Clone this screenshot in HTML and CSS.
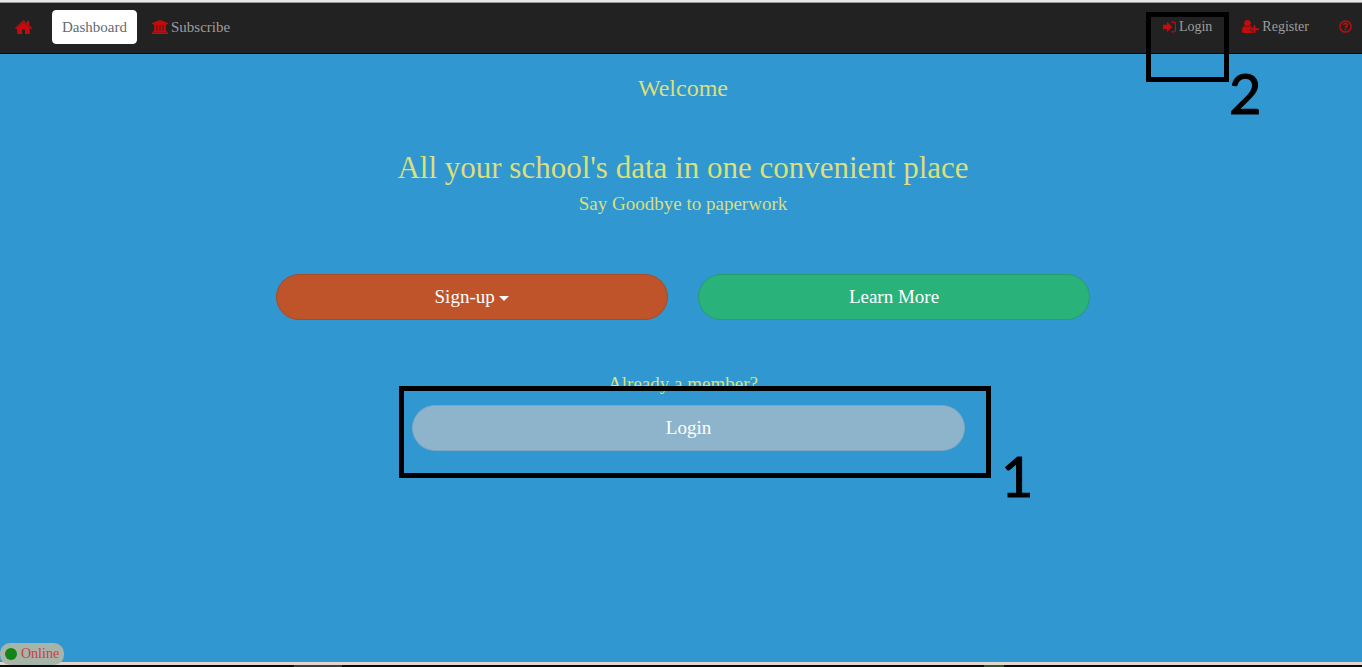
FILE: index.html
```html
<!DOCTYPE html>
<html lang="en">
<head>
<meta charset="utf-8">
<title>Welcome</title>
<link rel="stylesheet" href="styles.css">
</head>
<body>
<header class="topbar">
  <nav class="nav">
    <a class="nav-link home" href="#" aria-label="Home">
      <svg class="icon" width="17" height="14" viewBox="0 0 17 14"><path d="M8.500 0 12 3.300V1h2.200v4.300L17 8l-1 1.200-1.200-1V14H10V9.500H7V14H2.200V8.200L1 9.200 0 8z"/><path class="icon-seam" d="M1.800 8.200 8.500 2.200l6.700 6"/></svg>
    </a>
    <button class="dashboard" type="button">Dashboard</button>
    <a class="nav-link" href="#">
      <svg class="icon" width="16" height="14" viewBox="0 0 16 14"><path d="M8 0l8 3v1h-1.100v.8H1.100V4H0V3zM2.200 4.800h2.400v6h.8v-6h2.200v6h.8v-6h2.200v6h.8v-6h2.400v6h1v1.200H1.200v-1.200h1zM.6 12.200h14.800l.6 1V14H0v-.8z"/></svg>
      <span>Subscribe</span>
    </a>
  </nav>
  <nav class="nav nav-right">
    <a class="nav-link marked" href="#">
      <svg class="icon" width="13" height="12" viewBox="0 0 13 12"><path d="M0 3.800h4V.8L9.300 6 4 11.200v-3H0z"/><path class="icon-line" d="M8.500 1.100h2q2 0 2 2v5.800q0 2-2 2h-2"/></svg>
      <span>Login</span>
      <span class="frame frame-nav"><span class="digit digit-nav">2</span></span>
    </a>
    <a class="nav-link" href="#">
      <svg class="icon" width="17" height="13" viewBox="0 0 17 13"><circle cx="5.500" cy="3.300" r="3.300"/><path d="M2.500 6q3 2 6 0l1.300.7v2.100H8v2h2.600V13H1.500Q0 13 0 11.200 0 6.500 2.500 6zM11.500 5.500h2v2.800H17v2h-3.500V13h-2v-2.700H8.700v-2h2.800z"/></svg>
      <span>Register</span>
    </a>
    <a class="nav-link help" href="#" aria-label="Help">
      <svg class="icon" width="13" height="13" viewBox="0 0 13 13"><circle class="icon-ring" cx="6.500" cy="6.500" r="5.600"/><path class="icon-hook" d="M4.500 5Q4.800 3.400 6.500 3.400T8.500 5C8.500 6.300 6.500 6.200 6.500 7.900"/><path d="M5.600 8.700h1.800v1.500H5.600z"/></svg>
    </a>
  </nav>
</header>

<main class="hero">
  <h1 class="welcome">Welcome</h1>
  <h2 class="headline">All your school's data in one convenient place</h2>
  <p class="note">Say Goodbye to paperwork</p>
  <div class="actions">
    <button class="pill pill-signup" type="button">Sign-up <span class="caret"></span></button>
    <button class="pill pill-learn" type="button">Learn More</button>
  </div>
  <p class="note member">Already a member?</p>
  <div class="login-row">
    <div class="marked">
      <button class="pill pill-login" type="button">Login</button>
      <span class="frame frame-login"><span class="digit digit-login">1</span></span>
    </div>
  </div>
</main>

<footer class="taskbar"><span class="task task-one"></span><span class="task task-two"></span></footer>
<div class="status"><span class="dot"></span>Online</div>
</body>
</html>
```
FILE: styles.css
```css
* { box-sizing: border-box; }

body {
  margin: 0;
  min-height: 100vh;
  display: flex;
  flex-direction: column;
  background: #3097d1;
  font-family: "Liberation Serif", "Times New Roman", serif;
  font-size: 15px;
  line-height: 20px;
}

h1, h2, p { margin: 0; font-weight: 400; }
button { font: inherit; cursor: pointer; }

.topbar {
  display: flex;
  justify-content: space-between;
  height: 54px;
  padding-bottom: 2px;
  background: #222;
  border-top: 2px solid #e8e8e8;
  border-bottom: 1px solid #080808;
  box-shadow: inset 0 1px #999;
}

.nav { display: flex; align-items: center; }
.nav-right { font-size: 14px; }

.nav-link {
  display: flex;
  align-items: center;
  gap: 3px;
  height: 48px;
  padding: 0 15px;
  color: #9d9d9d;
  text-decoration: none;
}

.home { padding-right: 20px; }
.help { padding-right: 10px; }

.icon { display: block; fill: #c9090b; }
.icon-seam { fill: none; stroke: #222; stroke-width: 0.4; }
.icon-line { fill: none; stroke: #c9090b; stroke-width: 1.2; }
.icon-ring { fill: none; stroke: #c9090b; stroke-width: 1.5; }
.icon-hook { fill: none; stroke: #c9090b; stroke-width: 1.6; }

.dashboard {
  height: 34px;
  padding: 0 9px;
  border: 1px solid #fff;
  border-radius: 4px;
  background: #fff;
  color: #636b6f;
}

.hero {
  flex: 1;
  padding-left: 4px;
  color: #dbdf7c;
  text-align: center;
}

.welcome { margin-top: 20px; font-size: 24px; line-height: 28px; }
.headline { margin-top: 48px; font-size: 31px; line-height: 36px; }
.note { margin-top: 8px; font-size: 19px; line-height: 20px; }
.member { margin-top: 54px; }

.actions {
  display: grid;
  grid-template-columns: 1fr 1fr;
  gap: 30px;
  max-width: 814px;
  margin: 60px auto 0;
}

.pill {
  width: 100%;
  height: 46px;
  border: 1px solid;
  border-radius: 23px;
  color: #fff;
  font-size: 19px;
}

.pill-signup { background: #bf5329; border-color: #aa4a24; }
.pill-learn { background: #2ab27b; border-color: #259d6d; }
.pill-login { display: block; background: #8eb4cb; border-color: #7da8c3; }

.caret {
  display: inline-block;
  border: 5px solid transparent;
  border-top-color: #fff;
  border-bottom: 0;
  vertical-align: middle;
}

.login-row {
  max-width: 814px;
  margin: 11px auto 0;
  padding: 0 125px 0 136px;
}

.marked { position: relative; }

.frame {
  position: absolute;
  border: 5px solid #000;
  pointer-events: none;
}

.frame-nav { top: 9px; left: -2px; right: -2px; height: 70px; }
.frame-login { top: -19px; left: -13px; right: -26px; height: 92px; }

.digit {
  position: absolute;
  color: #000;
  font-family: Lato, sans-serif;
  font-size: 56px;
  line-height: 56px;
  -webkit-text-stroke: 1px #000;
}

.digit-nav { left: 78px; top: 48px; }
.digit-login { left: 597px; top: 57px; }

.taskbar {
  display: flex;
  height: 5px;
  border-top: 3px solid #e0d6cc;
  background: #0a0a0c;
}

.task { width: 48px; background: #3a3a3c; }
.task-one { margin-left: 294px; }
.task-two { width: 20px; margin-left: 642px; background: #285828; }

.status {
  position: fixed;
  left: 0;
  bottom: 2px;
  display: flex;
  align-items: center;
  gap: 4px;
  height: 22px;
  padding: 0 5px;
  border-radius: 10px;
  background: #a6b4a9;
  color: #c9403c;
  font-size: 14px;
}

.dot { width: 12px; height: 12px; border-radius: 50%; background: #148414; }
```
